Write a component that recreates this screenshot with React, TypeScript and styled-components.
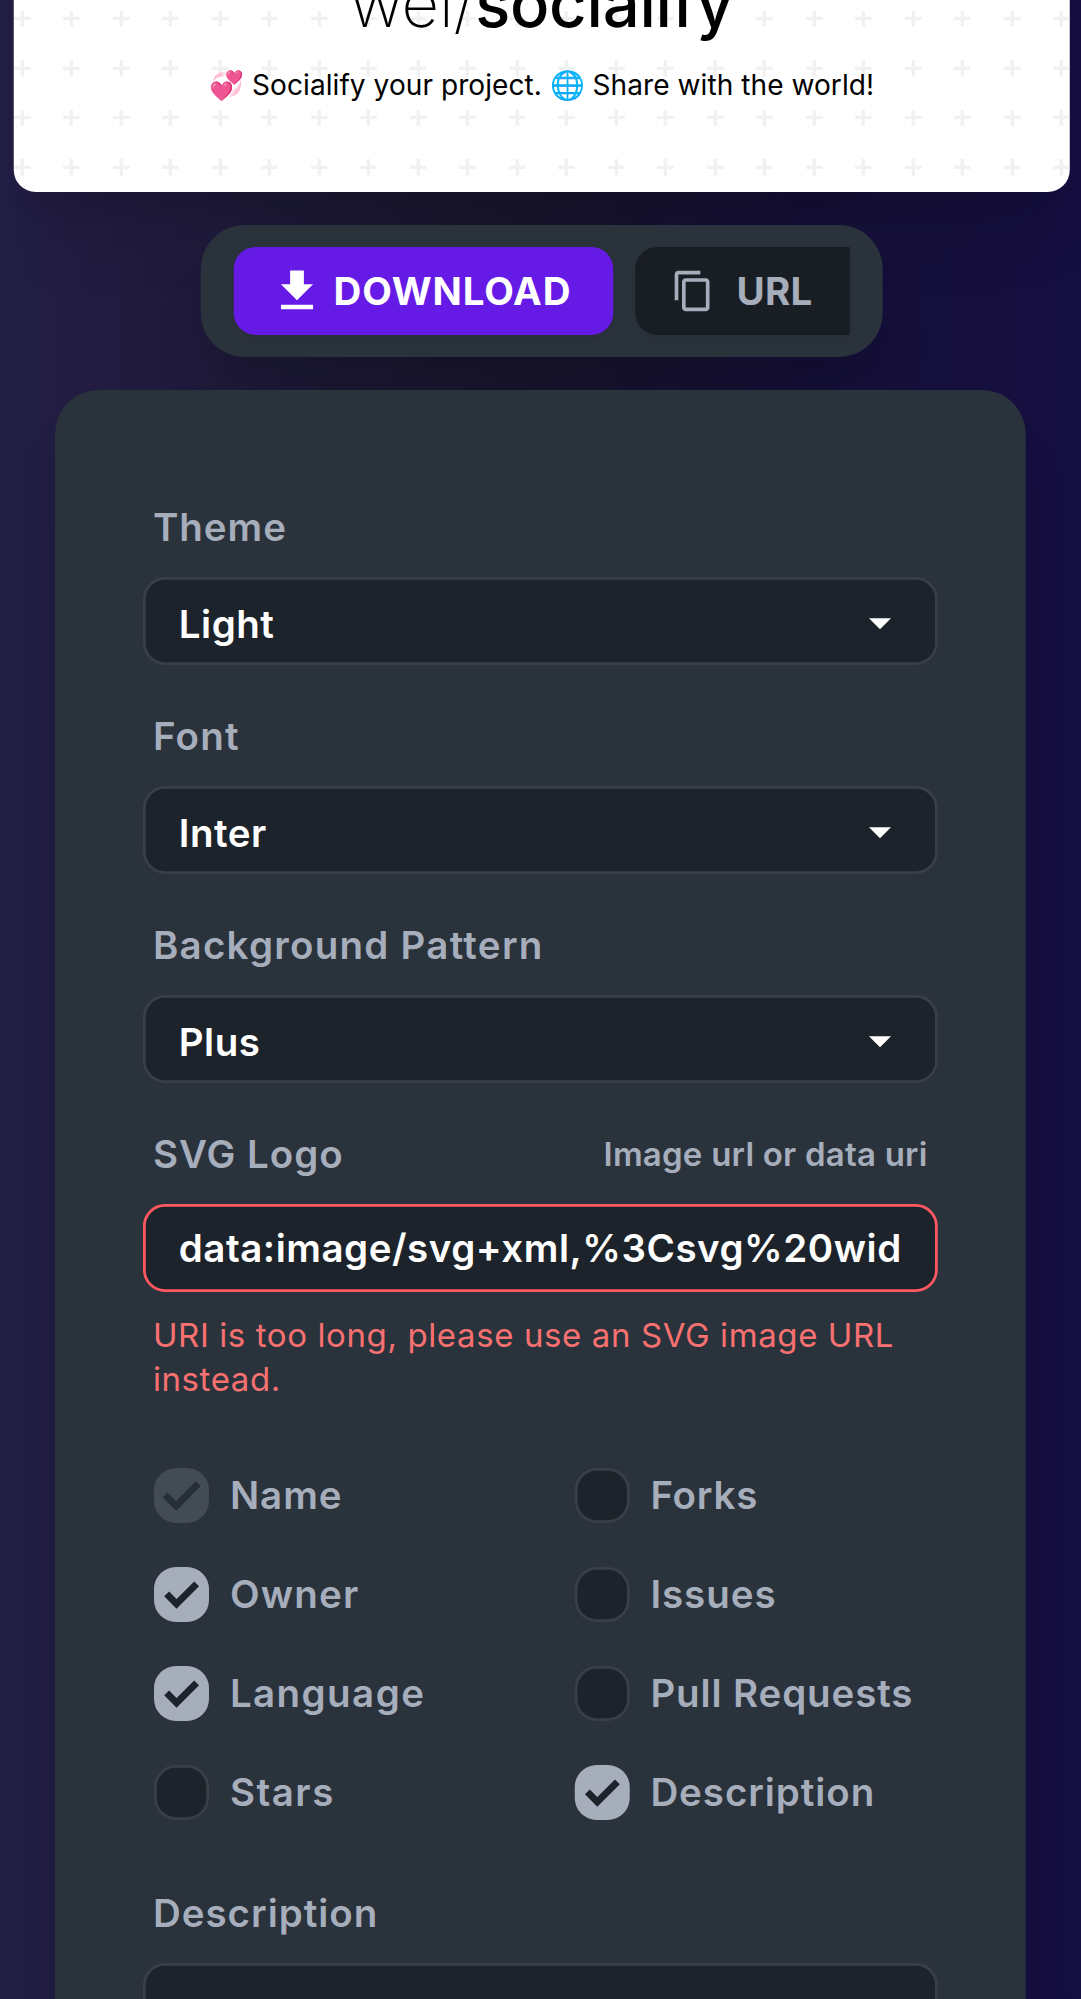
import React from "react";
import styled, { createGlobalStyle } from "styled-components";
import { MdContentCopy, MdFileDownload } from "react-icons/md";

const SCALE = 2.75;

const GlobalStyle = createGlobalStyle`
  *, *::before, *::after { box-sizing: border-box; }
  html, body { margin: 0; padding: 0; background: #15191e; overflow: hidden; }
`;

const Screen = styled.div`
  width: 1081px;
  height: 1999px;
  overflow: hidden;
  background: linear-gradient(
    90deg,
    #231f46 0%,
    #221c41 8%,
    #1d1937 25%,
    #19152c 46%,
    #17132f 58%,
    #151037 75%,
    #160f42 100%
  );
`;

/* A 393px wide phone layout, enlarged to device pixels. */
const Page = styled.main`
  width: 393px;
  height: 727px;
  display: flex;
  flex-direction: column;
  align-items: center;
  gap: 12px;
  transform: translateY(-0.5px) scale(${SCALE});
  transform-origin: 0 0;
  font-family: Inter, "Liberation Sans", sans-serif;
  font-size: 14px;
  line-height: 20px;
  color: #a6adbb;
`;

const Preview = styled.div`
  flex: none;
  width: 384px;
  height: 192px;
  margin-top: -122px;
  margin-left: 1px;
  border-radius: 8px;
  overflow: hidden;
  background: #fff;
  box-shadow: 0 20px 25px -5px rgba(0, 0, 0, 0.1), 0 8px 10px -6px rgba(0, 0, 0, 0.1);
`;

const plus =
  "M36 34v-4h-2v4h-4v2h4v4h2v-4h4v-2h-4zm0-30V0h-2v4h-4v2h4v4h2V6h4V4h-4zM6 34v-4H4v4H0v2h4v4h2v-4h4v-2H6zM6 4V0H4v4H0v2h4v4h2V6h4V4H6z";

const Canvas = styled.div`
  width: 1280px;
  height: 640px;
  transform: scale(0.3);
  transform-origin: 0 0;
  display: flex;
  flex-direction: column;
  align-items: center;
  justify-content: flex-end;
  padding-bottom: 110px;
  color: #000;
  background-image: url("data:image/svg+xml,${encodeURIComponent(
    `<svg xmlns="http://www.w3.org/2000/svg" width="120" height="120" viewBox="0 0 60 60"><path fill="#eeeeee" fill-opacity="0.8" d="${plus}"/></svg>`
  )}");
`;

const RepoTitle = styled.div`
  font-size: 79px;
  line-height: 96px;
  font-weight: 200;
  letter-spacing: -0.2px;
  white-space: nowrap;

  b {
    font-weight: 500;
    letter-spacing: -0.3px;
  }
`;

const RepoText = styled.div`
  margin-top: 31px;
  font-size: 34px;
  line-height: 40px;
  font-weight: 400;
  letter-spacing: 0.07px;
  white-space: nowrap;
`;

const Toolbar = styled.div`
  flex: none;
  display: flex;
  gap: 8px;
  height: 48px;
  padding: 8px 12px;
  margin-left: 1px;
  border-radius: 16px;
  background: #2a323c;
  box-shadow: 0 20px 25px -5px rgba(0, 0, 0, 0.1), 0 8px 10px -6px rgba(0, 0, 0, 0.1);
`;

const Button = styled.button<{ $primary?: boolean }>`
  display: flex;
  align-items: center;
  gap: ${(p) => (p.$primary ? 3.3 : 7.8)}px;
  width: ${(p) => (p.$primary ? 138 : 78)}px;
  height: 32px;
  padding: 0 12px;
  border: 1px solid ${(p) => (p.$primary ? "#661ae6" : "#191e24")};
  border-radius: ${(p) => (p.$primary ? "8px" : "8px 0 0 8px")};
  background: ${(p) => (p.$primary ? "#661ae6" : "#191e24")};
  color: ${(p) => (p.$primary ? "#fff" : "#a6adbb")};
  font: 700 14px/14px Inter, "Liberation Sans", sans-serif;
  letter-spacing: ${(p) => (p.$primary ? 0.3 : 0.1)}px;
  text-transform: uppercase;
  white-space: nowrap;
  box-shadow: 0 1px 2px rgba(0, 0, 0, 0.05);

  svg {
    flex: none;
  }
`;

const FormCard = styled.form`
  flex: none;
  display: flex;
  flex-direction: column;
  gap: 8px;
  width: 353px;
  height: 640px;
  padding: 32px;
  border-radius: 16px;
  background: #2a323c;
  box-shadow: 0 20px 25px -5px rgba(0, 0, 0, 0.1), 0 8px 10px -6px rgba(0, 0, 0, 0.1);
`;

const Field = styled.div`
  display: flex;
  flex-direction: column;
`;

const LabelRow = styled.label<{ $tracking?: number }>`
  display: flex;
  align-items: center;
  justify-content: space-between;
  padding: 7.75px 3.7px 8.25px 3.6px;
  font-weight: 600;
  letter-spacing: ${(p) => p.$tracking ?? 0.36}px;
`;

const Hint = styled.span`
  font-size: 12px;
  line-height: 16px;
  letter-spacing: 0.08px;
`;

const Control = styled.div<{ $error?: boolean; $select?: boolean }>`
  display: flex;
  align-items: center;
  justify-content: space-between;
  height: 32px;
  padding: ${(p) => (p.$select ? "2px 16px 0 12px" : "0 12px")};
  border: 1px solid ${(p) => (p.$error ? "#ff5861" : "#383f47")};
  border-radius: 8px;
  background: #1d232a;
  color: #fff;
  font-weight: 600;
  letter-spacing: 0.19px;
  white-space: nowrap;
`;

const Clip = styled.span`
  overflow: hidden;
`;

const Caret = styled.i`
  width: 0;
  height: 0;
  border: 4px solid transparent;
  border-top-color: #fff;
  border-bottom-width: 0;
`;

const ErrorText = styled.div`
  padding: 7.75px 4px 8.25px 3.6px;
  font-size: 12px;
  line-height: 16px;
  letter-spacing: 0.22px;
  color: #f87171;
`;

const Options = styled.div`
  display: grid;
  grid-template-columns: 1fr 1fr;
  grid-template-rows: repeat(4, 36px);
  grid-auto-flow: column;
  column-gap: 16px;
`;

const Option = styled.label<{ $tracking?: number }>`
  display: flex;
  align-items: center;
  gap: 7.6px;
  padding: 8px 4px;
  font-weight: 600;
  letter-spacing: ${(p) => p.$tracking ?? 0.35}px;
  line-height: 19.5px;
  white-space: nowrap;

  &:nth-child(n + 5) {
    gap: 8px;
  }
`;

const Box = styled.span<{ $checked?: boolean; $disabled?: boolean }>`
  display: block;
  flex: none;
  width: 20px;
  height: 20px;
  border-radius: 8px;
  border: ${(p) => (p.$checked ? "0" : "1px solid #383f47")};
  background: ${(p) => (p.$disabled ? "#434b55" : p.$checked ? "#a6adbb" : "#1d232a")};

  svg {
    display: block;
  }
`;

type OptionState = "on" | "off" | "locked";

const options: [string, OptionState, number?][] = [
  ["Name", "locked"],
  ["Owner", "on", 0.45],
  ["Language", "on", 0.52],
  ["Stars", "off", 0.55],
  ["Forks", "off", 0.3],
  ["Issues", "off"],
  ["Pull Requests", "off", 0.32],
  ["Description", "on", 0.34],
];

const selects: [string, string, number?][] = [
  ["Theme", "Light"],
  ["Font", "Inter", 0.45],
  ["Background Pattern", "Plus", 0.46],
];

function Check({ state }: { state: OptionState }) {
  if (state === "off") return <Box />;
  const locked = state === "locked";
  return (
    <Box $checked $disabled={locked}>
      <svg width="20" height="20" viewBox="0 0 20 20" fill="none">
        <path
          d={locked ? "M4 9.8L8.05 13.9L16.1 5.7" : "M4.6 9.75L8.2 13.4L15.5 6.15"}
          stroke={locked ? "#262e38" : "#1d232a"}
          strokeWidth="2.5"
        />
      </svg>
    </Box>
  );
}

export default function App() {
  return (
    <>
      <GlobalStyle />
      <Screen>
        <Page>
          <Preview>
            <Canvas>
              <RepoTitle>
                wei/<b>socialify</b>
              </RepoTitle>
              <RepoText>💞 Socialify your project. 🌐 Share with the world!</RepoText>
            </Canvas>
          </Preview>
          <Toolbar>
            <Button $primary type="button">
              <MdFileDownload size={20} />
              Download
            </Button>
            <Button type="button">
              <MdContentCopy size={16} />
              URL
            </Button>
          </Toolbar>
          <FormCard>
            {selects.map(([label, value, tracking]) => (
              <Field key={label}>
                <LabelRow $tracking={tracking}>{label}</LabelRow>
                <Control $select>
                  {value}
                  <Caret />
                </Control>
              </Field>
            ))}
            <Field>
              <LabelRow>
                SVG Logo
                <Hint>Image url or data uri</Hint>
              </LabelRow>
              <Control $error>
                <Clip>data:image/svg+xml,%3Csvg%20wid</Clip>
              </Control>
              <ErrorText>URI is too long, please use an SVG image URL instead.</ErrorText>
            </Field>
            <Options>
              {options.map(([name, state, tracking]) => (
                <Option key={name} $tracking={tracking}>
                  <Check state={state} />
                  {name}
                </Option>
              ))}
            </Options>
            <Field>
              <LabelRow>Description</LabelRow>
              <Control />
            </Field>
          </FormCard>
        </Page>
      </Screen>
    </>
  );
}
